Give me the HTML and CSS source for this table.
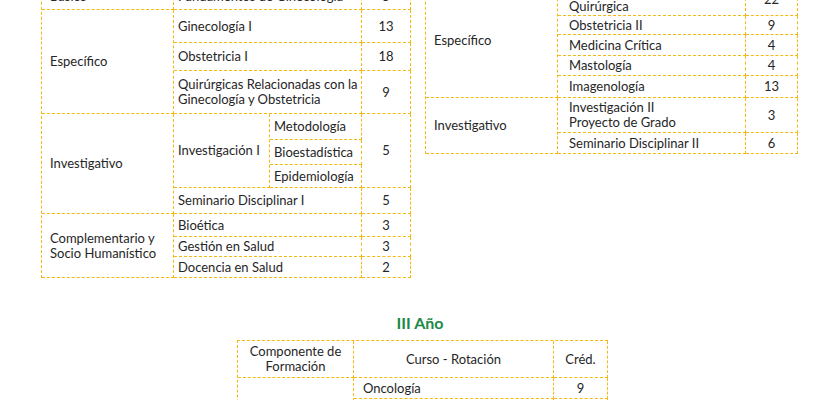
FILE: index.html
```html
<!DOCTYPE html>
<html lang="es">
<head>
<meta charset="utf-8">
<title>Plan de estudios</title>
<link rel="stylesheet" href="styles.css">
</head>
<body>
<main class="page">
  <section class="pair">
    <div class="tbl t-left">
      <div class="c comp">Básico</div>
      <div class="c course span2">Fundamentos de Ginecología</div>
      <div class="c cred">5</div>

      <div class="c comp r3">Específico</div>
      <div class="c course span2">Ginecología I</div>
      <div class="c cred">13</div>
      <div class="c course span2">Obstetricia I</div>
      <div class="c cred">18</div>
      <div class="c course span2">Quirúrgicas Relacionadas con la<br>Ginecología y Obstetricia</div>
      <div class="c cred">9</div>

      <div class="c comp r4">Investigativo</div>
      <div class="c course r3">Investigación I</div>
      <div class="c sub">Metodología</div>
      <div class="c cred r3">5</div>
      <div class="c sub">Bioestadística</div>
      <div class="c sub">Epidemiología</div>
      <div class="c course span2">Seminario Disciplinar I</div>
      <div class="c cred">5</div>

      <div class="c comp r3">Complementario y<br>Socio Humanístico</div>
      <div class="c course span2">Bioética</div>
      <div class="c cred">3</div>
      <div class="c course span2">Gestión en Salud</div>
      <div class="c cred">3</div>
      <div class="c course span2">Docencia en Salud</div>
      <div class="c cred">2</div>
    </div>

    <div class="tbl t-right">
      <div class="c comp r5">Específico</div>
      <div class="c course">Ginecología Oncológica y<br>Quirúrgica</div>
      <div class="c cred">22</div>
      <div class="c course">Obstetricia II</div>
      <div class="c cred">9</div>
      <div class="c course">Medicina Crítica</div>
      <div class="c cred">4</div>
      <div class="c course">Mastología</div>
      <div class="c cred">4</div>
      <div class="c course">Imagenología</div>
      <div class="c cred">13</div>

      <div class="c comp r2">Investigativo</div>
      <div class="c course">Investigación II<br>Proyecto de Grado</div>
      <div class="c cred">3</div>
      <div class="c course">Seminario Disciplinar II</div>
      <div class="c cred">6</div>
    </div>
  </section>

  <h2 class="year">III Año</h2>

  <div class="tbl t-bottom">
    <div class="c head">Componente de<br>Formación</div>
    <div class="c head">Curso - Rotación</div>
    <div class="c head">Créd.</div>

    <div class="c comp r4">Específico</div>
    <div class="c course">Oncología</div>
    <div class="c cred">9</div>
    <div class="c course">Ginecología III</div>
    <div class="c cred">12</div>
    <div class="c course">Obstetricia III</div>
    <div class="c cred">12</div>
    <div class="c course">Perinatología</div>
    <div class="c cred">8</div>
  </div>
</main>
</body>
</html>
```
FILE: styles.css
```css
* { box-sizing: border-box; }

html, body {
  margin: 0;
  padding: 0;
  background: #ffffff;
}

body {
  width: 840px;
  height: 400px;
  overflow: hidden;
  font-family: Lato, "Open Sans", sans-serif;
  font-size: 13px;
  line-height: 15px;
  color: #262626;
}

.page {
  margin-top: -18px;
}

.pair {
  display: flex;
  align-items: flex-start;
  gap: 14px;
  padding-left: 41px;
}

.tbl {
  display: grid;
  border-top: 1px dashed #f6b912;
  border-left: 1px dashed #f6b912;
}

.c {
  display: flex;
  align-items: center;
  border-right: 1px dashed #f6b912;
  border-bottom: 1px dashed #f6b912;
  white-space: nowrap;
}

.comp { padding-left: 8px; }
.course { padding-left: 4px; }
.sub { padding-left: 4px; }
.cred { justify-content: center; }
.head { justify-content: center; text-align: center; }

.span2 { grid-column: span 2; }
.r2 { grid-row: span 2; }
.r3 { grid-row: span 3; }
.r4 { grid-row: span 4; }
.r5 { grid-row: span 5; }

.t-left {
  grid-template-columns: 132px 96px 92px 49px;
  grid-template-rows: 27px 33px 28px 43px 26px 25px 23px 26px 23px 20px 21px;
}

.t-right {
  grid-template-columns: 132px 188px 52px;
  grid-template-rows: 33px 19px 21px 20px 22px 35px 21px;
}

.t-right .course { padding-left: 11px; }

.year {
  margin: 35px 0 7px;
  text-align: center;
  font-size: 16px;
  line-height: 20px;
  font-weight: 700;
  color: #1b8a47;
}

.t-bottom {
  margin-left: 237px;
  width: 371px;
  grid-template-columns: 116px 200px 54px;
  grid-template-rows: 37px 21px 21px 21px 21px;
}

.t-bottom .course { padding-left: 9px; }
```
